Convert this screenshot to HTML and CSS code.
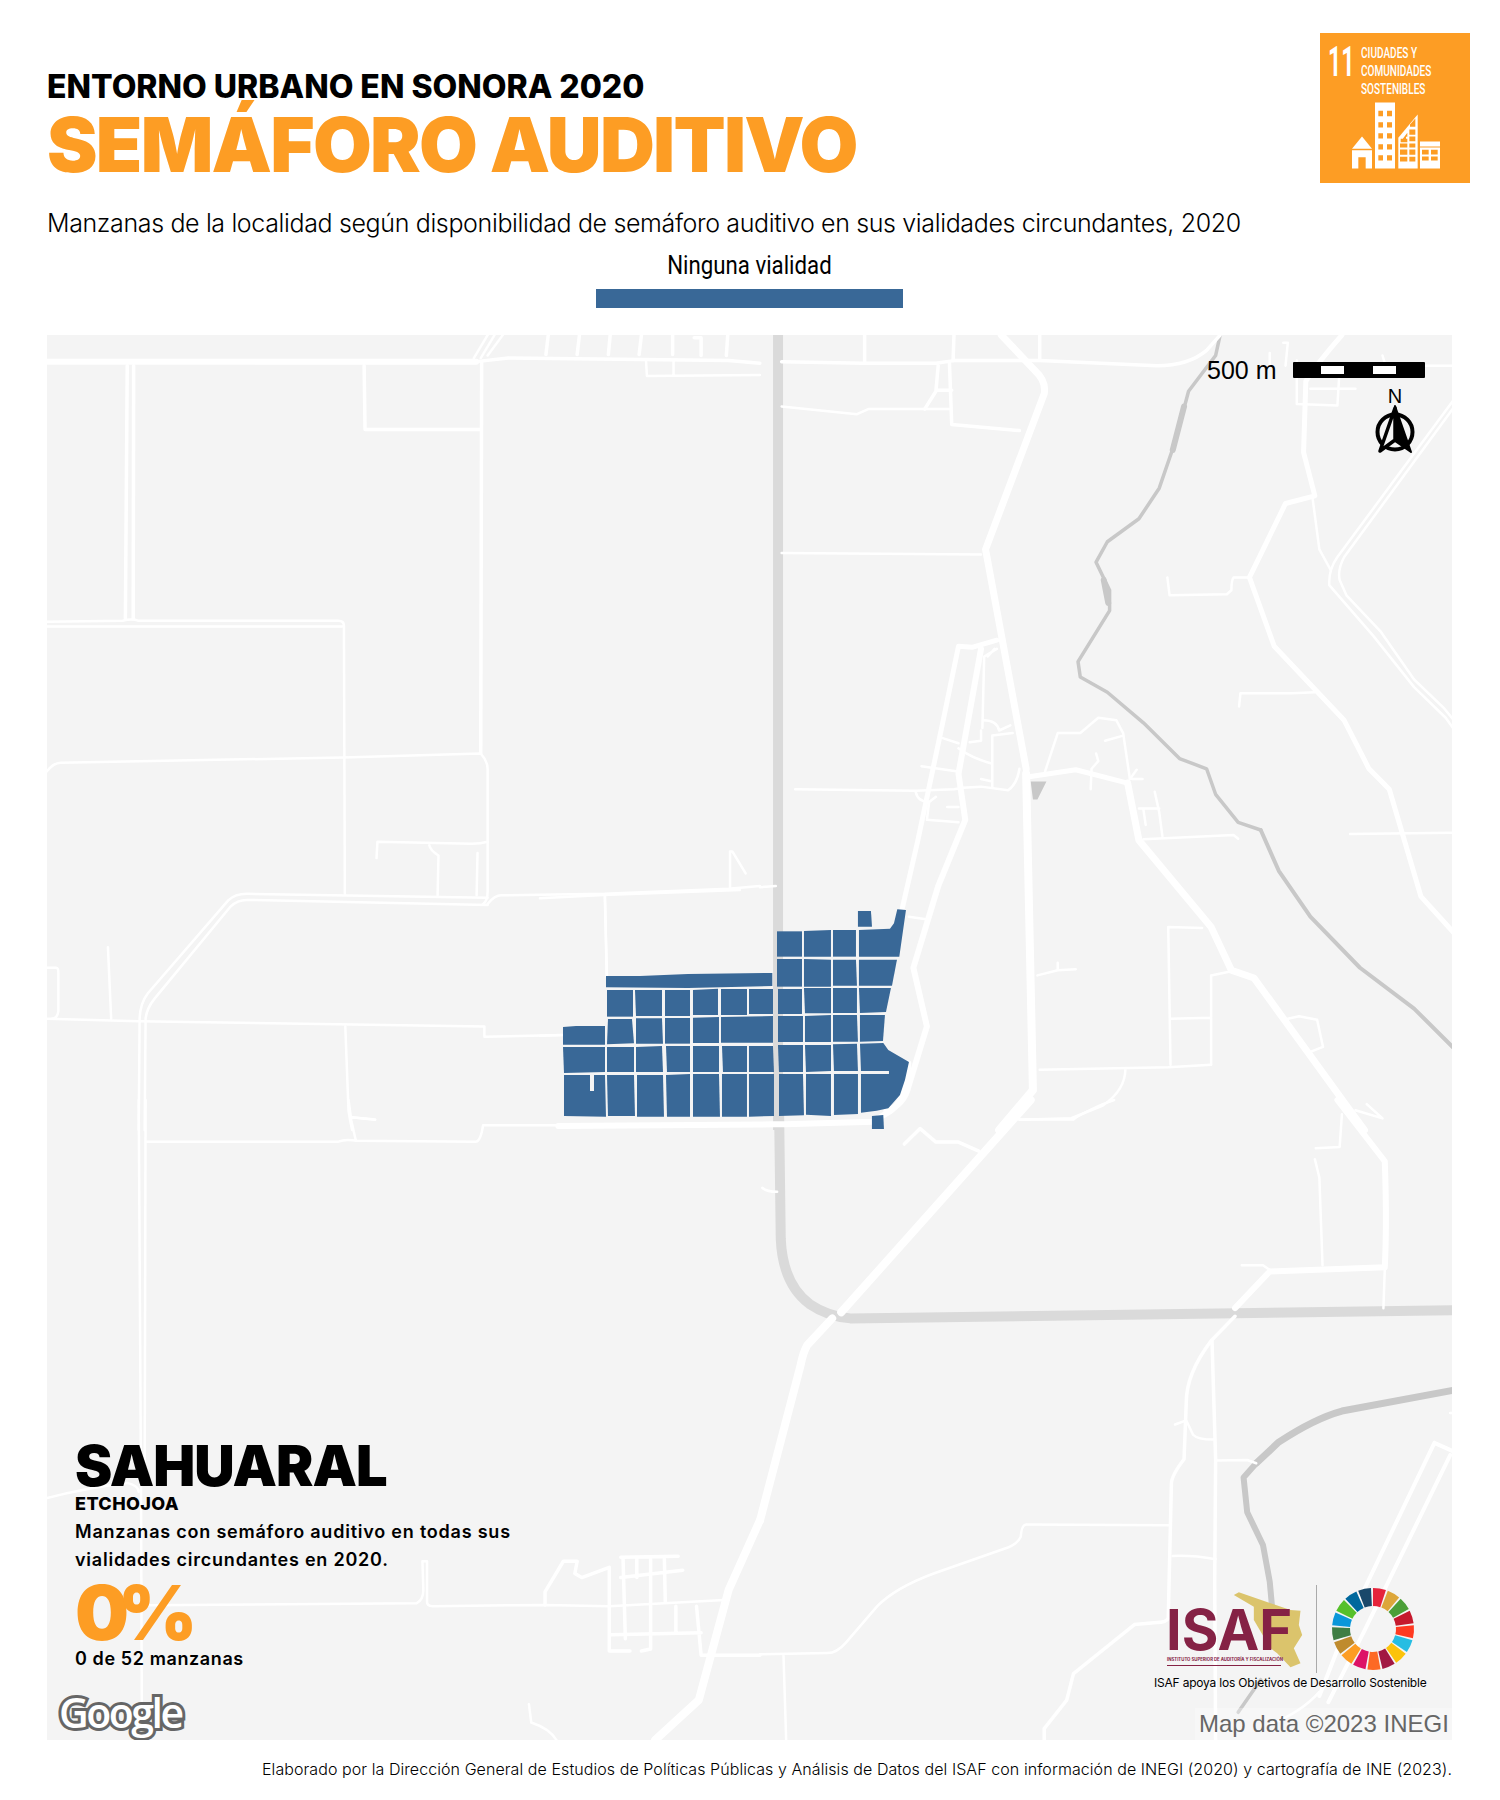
FILE: index.html
```html
<!DOCTYPE html>
<html lang="es">
  <head>
    <meta charset="utf-8">
    <title>Semáforo auditivo - Sahuaral</title>
    <link rel="stylesheet" href="styles.css">
  </head>
  <body>
    <div class="page">
      <header class="header">
        <div class="titles">
          <p class="kicker">ENTORNO URBANO EN SONORA 2020</p>
          <h1 class="title">SEMÁFORO AUDITIVO</h1>
        </div>
        <div class="sdg-badge">
          <div class="sdg-head">
            <span class="sdg-num">11</span>
            <span class="sdg-name">CIUDADES Y<br>COMUNIDADES<br>SOSTENIBLES</span>
          </div>
          <svg class="sdg-city" viewBox="600 275 276 206">
            <!-- casa -->
            <polygon class="w" points="606,418 636,381 666,418"/>
            <path class="w" d="M606 422H666V477H647V443H625V477H606Z"/>
            <!-- torre -->
            <rect class="w" x="675" y="279" width="60" height="198"/>
            <path class="o" d="M685 304h14v16h-14zM711 304h15v16h-15zM685 338h14v16h-14zM711 338h15v16h-15zM685 371h14v16h-14zM711 371h15v16h-15zM685 404h14v16h-14zM711 404h15v16h-15zM685 437h14v16h-14zM711 437h15v16h-15z"/>
            <!-- edificio inclinado -->
            <polygon class="w" points="745,477 745,385 803,315 803,477"/>
            <path class="o" d="M780 345l16-18v25h-16zM755 392l17-22v12l-4 0v10zM778 360h18v16h-18zM752 388h20v10h-20zM778 381h18v14h-18zM750 402h22v12h-22zM778 402h18v12h-18zM750 420h22v16h-22zM778 420h18v16h-18zM750 442h22v14h-22zM778 442h18v14h-18z"/>
            <!-- bajo -->
            <rect class="w" x="810" y="396" width="60" height="81"/>
            <path class="o" d="M810 411h60v3h-60zM816 421h20v14h-20zM843 421h20v14h-20zM816 441h20v12h-20zM843 441h20v12h-20z"/>
          </svg>
        </div>
      </header>

      <p class="subtitle">Manzanas de la localidad según disponibilidad de semáforo auditivo en sus vialidades circundantes, 2020</p>

      <div class="legend">
        <span class="legend-label">Ninguna vialidad</span>
        <span class="legend-bar"></span>
      </div>

      <div class="map">
        <svg class="map-art" viewBox="47 335 1405 1405" width="1405" height="1405">
          <!-- carretera gris y rio: tramo derecho arriba -->
          <g transform="translate(760 330) scale(.4511 .5102)">
            <path class="highway" d="M40 10V1568"/>
            <path class="river r3" d="M1020 10L1010 50 950 120 920 220 885 310 840 370 770 415 745 455 775 510 775 550 705 650 710 680 770 710 850 770 930 840 990 860 1010 910 1060 965 1110 980"/>
            <path class="river r6" d="M940 150L915 235M762 490L772 535"/>
            <path class="river r4" d="M1110 980L1150 1060 1220 1150 1330 1250 1450 1330 1552 1420"/>
            <path class="blob" d="M600 885L635 885 615 920 605 920Z"/>
          </g>
          <g transform="translate(760 1100) scale(.4511 .4082)">
            <path class="highway" d="M42 0L46 340Q50 450 110 500 150 530 200 535L1552 515"/>
            <path class="river r7" d="M1552 708L1290 762Q1230 780 1150 838L1100 890"/>
            <path class="river r6" d="M1100 890L1072 925 1080 1010 1115 1090 1130 1180 1135 1240"/>
            <path class="river r3" d="M1110 1420L1060 1500"/>
          </g>

          <!-- cuadrante noroeste -->
          <g transform="translate(40 330) scale(.4591 .5102)">
            <path class="r6" d="M15 62H950"/>
            <path class="r3" d="M950 62L1020 55 1310 58 1500 60 1568 65"/>
            <path class="r3" d="M190 70L186 565M204 70L203 565"/>
            <path class="r2" d="M15 572L180 570Q200 565 215 570L650 570Q662 570 662 580M15 581L658 581"/>
            <path class="r2" d="M662 580L664 1105"/>
            <path class="r3" d="M706 70L708 195H960M962 62L960 830"/>
            <path class="r2" d="M15 865Q30 848 45 848L660 838 960 830Q975 845 975 860V1100Q975 1120 965 1125"/>
            <path class="r2" d="M975 1003Q960 1007 940 1007L735 1003 733 1035M848 1010Q850 1020 868 1030L866 1108M953 1025L951 1108"/>
            <path class="r2" d="M975 1113L450 1105Q425 1105 410 1118L235 1300Q218 1320 217 1350L215 1568"/>
            <path class="r2" d="M975 1127L450 1117Q430 1117 415 1130L250 1310Q232 1330 230 1350L228 1568"/>
            <path class="r2" d="M975 1125Q990 1108 1005 1108L1230 1105 1500 1095 1568 1090M1230 1105L1235 1265"/>
            <path class="r2" d="M1503 1095V1022H1508L1537 1065"/>
            <path class="r2" d="M15 1350L215 1355 968 1365V1385L1140 1382"/>
            <path class="r2" d="M15 1250H35Q40 1250 40 1260V1335Q38 1350 25 1350M148 1210L155 1350"/>
            <path class="r2" d="M665 1365L672 1530Q675 1550 680 1568M678 1543L730 1548"/>
            <path class="r2" d="M945 55L975 10M960 55L990 10M975 50L1008 10"/>
            <path class="r3" d="M1107 10L1102 48M1175 10L1170 48M1242 10L1238 48M1310 10L1305 48M1378 10V48M1425 15H1440V50M1498 10L1495 50"/>
            <path class="r2" d="M1320 60L1322 90 1568 88M1380 60V88"/>
          </g>

          <!-- cuadrante suroeste -->
          <g transform="translate(40 1100) scale(.4591 .4082)">
            <path class="r2" d="M215 0L220 940 222 1568M230 0L228 940"/>
            <path class="r2" d="M232 102H650Q665 95 690 100L950 102Q960 100 965 62H1140"/>
            <path class="r2" d="M672 0L678 50 688 100M678 42L730 48"/>
            <path class="r2" d="M15 975Q100 950 190 938 215 945 215 960"/>
            <path class="r2" d="M232 1238L820 1233Q835 1225 835 1200L833 1130H843V1230Q843 1240 855 1240L1100 1237 1240 1240 1490 1225"/>
            <path class="r3" d="M1100 1237V1205L1140 1130H1170L1165 1160 1180 1170 1240 1145V1350H1285M1265 1120L1390 1118M1270 1125L1275 1320M1300 1125V1170M1330 1125V1345L1310 1350M1360 1125L1362 1230M1265 1170L1400 1152M1245 1310L1440 1305M1385 1240V1305M1430 1240L1440 1360H1568"/>
            <path class="r8" d="M1568 1030L1500 1200 1435 1470 1340 1568"/>
            <path class="r2" d="M1065 1480L1070 1525Q1110 1540 1125 1568"/>
          </g>

          <!-- cuadrante noreste -->
          <g transform="translate(760 330) scale(.4511 .5102)">
            <path class="r7" d="M535 10L610 80Q635 100 630 125L500 430 590 860"/>
            <path class="r8" d="M590 870L605 1490 530 1568"/>
            <path class="r3" d="M48 62L230 65H390L430 60H620L880 70Q950 70 990 40L1020 10"/>
            <path class="r3" d="M232 10V62M430 10L428 60M620 10V58"/>
            <path class="r3" d="M395 70L390 120 365 155M390 118H425M420 65L425 185 575 197"/>
            <path class="r2" d="M48 150L215 165 240 155H420M48 437L490 440"/>
            <path class="r5" d="M1290 10Q1240 60 1210 100L1205 240 1230 325 1165 340 1085 485 1140 620 1295 765 1350 860 1395 900 1465 1110 1552 1195"/>
            <path class="r2" d="M1190 60V145L1280 148 1285 75M1220 115H1320M1380 50L1385 65M1160 25H1170L1165 70M1130 45V70M1260 70H1552"/>
            <path class="r2" d="M1225 330L1240 430 1265 470"/>
            <path class="r2" d="M1552 120L1280 445Q1260 470 1262 500L1360 600 1450 700 1520 760 1552 800"/>
            <path class="r2" d="M1552 135L1295 445Q1280 470 1285 490L1300 520 1375 590 1450 685 1515 740 1552 780"/>
            <path class="r2" d="M1085 485H1050Q1045 490 1045 510L1035 518 908 520 903 485"/>
            <path class="r2" d="M1062 738L1065 712H1180L1230 710M1308 988L1552 985"/>
            <path class="r5" d="M525 608L470 622 440 620 405 770 350 1000 315 1135"/>
            <path class="r6" d="M490 625L440 870 455 960 395 1090 340 1250 370 1365 330 1480Q320 1520 280 1530"/>
            <path class="r2" d="M525 625L497 640 493 780M520 625L505 640"/>
            <path class="r2" d="M405 800L440 810M358 855L435 865M440 820Q470 840 515 850M515 795V895M515 795L560 790M495 765Q525 765 530 785L555 775M490 785V805L465 808M490 880L515 885"/>
            <path class="r2" d="M78 900L345 903 430 900 450 897 490 895 550 902Q570 890 575 860M345 905Q350 925 375 925L390 915M375 925L370 960 440 965M415 935H440"/>
            <path class="r2" d="M632 865L660 790H710L750 760 790 765 805 790 820 880"/>
            <path class="r5" d="M600 875L700 862 815 888"/>
            <path class="r2" d="M765 805L805 795M745 830L750 845 735 860 733 900M820 880L835 862M825 880H848"/>
            <path class="r7" d="M815 888L840 1000 1000 1170 1045 1255 1095 1270 1300 1520 1340 1568"/>
            <path class="r2" d="M840 938H885M875 905L885 945 892 992M850 940L855 970M850 998L1050 990 1060 997"/>
            <path class="r2" d="M905 1170L910 1440M905 1170L980 1172M1000 1265V1440M1000 1265L1045 1257M910 1350L1000 1348"/>
            <path class="r2" d="M620 1450L905 1445 1000 1440M810 1448Q810 1490 760 1520L690 1545 575 1548"/>
            <path class="r2" d="M615 1265L660 1255 700 1253M660 1255V1240M330 1150L368 1155M0 1092L35 1090"/>
            <path class="r2" d="M1170 1350L1195 1345 1235 1352 1248 1405 1220 1415M1285 1500L1310 1530"/>
          </g>

          <!-- cuadrante sureste -->
          <g transform="translate(760 1100) scale(.4511 .4082)">
            <path class="r8" d="M600 0L180 520"/>
            <path class="r8" d="M160 535L105 600Q95 620 90 650L0 1030"/>
            <path class="r3" d="M1053 530L1000 590Q945 670 945 740L940 880Q912 920 912 940L905 1270Q900 1280 880 1280L830 1285 695 1405 680 1470 630 1540V1568"/>
            <path class="r3" d="M1002 590L1010 880 1008 1180 1010 1568"/>
            <path class="r6" d="M1053 510L1130 420 1385 410Q1390 300 1385 150L1280 0"/>
            <path class="r2" d="M1385 415L1382 510M1068 405H1115L1135 420M1230 145L1240 190 1247 405M1290 35L1285 115 1232 118M1345 10L1380 45 1320 25"/>
            <path class="r3" d="M320 108L355 70 390 103H440L485 125"/>
            <path class="r2" d="M5 215Q15 225 38 225M575 48H695Q700 40 760 10L785 0"/>
            <path class="r2" d="M920 795L945 785 960 820Q970 832 1005 832M1012 883L1080 882 1100 890M915 1117Q960 1115 1010 1125"/>
            <path class="r2" d="M905 1042L590 1040Q580 1040 578 1070 570 1090 540 1100L385 1160Q300 1195 260 1240L190 1330Q170 1355 150 1355L0 1358M52 1358L58 1568"/>
            <path class="r4" d="M1495 840L1300 1290 1240 1460M1530 870L1340 1300 1260 1475M1495 840L1552 868"/>
            <path class="r2" d="M1530 767H1552M1240 1450Q1200 1500 1130 1530"/>
          </g>

          <!-- manzanas y calle inferior -->
          <g transform="translate(540 890) scale(.3333)">
            <path class="r6" d="M55 708L700 703H735L1000 695 1040 670Q1100 640 1105 520"/>
            <path class="r2" d="M0 25L190 15 600 0M195 15L200 260M0 437L65 435"/>
            <g class="blocks">
              <polygon points="954,63 993,63 996,110 954,110"/>
              <polygon points="957,120 1050,116 1062,100 1072,58 1098,60 1078,200 957,200"/>
              <polygon points="711,124 786,124 786,200 711,200"/>
              <polygon points="792,123 873,120 873,200 792,200"/>
              <polygon points="879,120 948,120 948,200 879,200"/>
              <polygon points="711,207 786,207 786,290 711,290"/>
              <polygon points="792,207 873,209 873,290 792,290"/>
              <polygon points="879,209 948,209 951,287 879,287"/>
              <polygon points="957,209 1071,209 1056,287 957,287"/>
              <polygon points="198,258 300,258 444,252 697,249 697,288 444,294 198,292"/>
              <polygon points="201,300 279,300 279,380 201,380"/>
              <polygon points="285,300 366,300 366,378 288,378"/>
              <polygon points="375,300 450,300 450,378 375,378"/>
              <polygon points="459,300 534,296 534,375 459,375"/>
              <polygon points="543,297 621,297 621,375 543,375"/>
              <polygon points="627,297 699,297 699,372 627,372"/>
              <polygon points="714,297 786,297 786,372 714,372"/>
              <polygon points="792,294 873,294 873,370 795,370"/>
              <polygon points="879,294 951,294 951,369 879,369"/>
              <polygon points="957,294 1053,294 1038,366 960,369"/>
              <polygon points="204,387 276,387 282,460 201,463"/>
              <polygon points="288,385 366,385 369,461 288,461"/>
              <polygon points="375,384 450,384 450,461 375,461"/>
              <polygon points="459,383 537,381 537,459 459,459"/>
              <polygon points="543,381 699,378 699,458 543,458"/>
              <polygon points="714,378 789,378 789,456 714,456"/>
              <polygon points="795,378 873,375 873,456 795,456"/>
              <polygon points="879,375 951,375 954,455 879,455"/>
              <polygon points="960,375 1035,375 1029,453 960,455"/>
              <polygon points="69,411 108,408 195,408 195,464 69,464"/>
              <polygon points="69,471 195,471 195,546 72,549"/>
              <polygon points="201,471 282,471 282,546 201,546"/>
              <polygon points="288,471 366,468 369,546 288,546"/>
              <polygon points="378,468 450,468 450,546 381,546"/>
              <polygon points="459,468 537,468 537,546 459,546"/>
              <polygon points="546,468 621,468 621,546 549,546"/>
              <polygon points="627,468 699,468 702,546 627,546"/>
              <polygon points="714,465 789,465 789,546 717,546"/>
              <polygon points="795,465 873,465 873,543 798,546"/>
              <polygon points="879,463 951,461 954,543 882,543"/>
              <polygon points="960,461 1030,459 1045,480 1107,516 1095,570 1080,615 1045,655 1010,662 963,668 963,552 1047,552 1047,543 963,543"/>
              <polygon points="72,555 150,555 150,603 162,603 162,555 195,555 198,680 72,678"/>
              <polygon points="201,555 282,555 285,678 204,678"/>
              <polygon points="291,555 369,555 372,680 291,680"/>
              <polygon points="378,555 450,552 450,680 381,680"/>
              <polygon points="459,552 537,552 540,680 459,680"/>
              <polygon points="546,552 621,552 621,680 546,680"/>
              <polygon points="627,552 702,552 702,678 627,680"/>
              <polygon points="717,552 789,552 792,676 717,678"/>
              <polygon points="798,552 873,552 873,678 798,674"/>
              <polygon points="882,552 954,552 954,672 882,675"/>
              <polygon points="996,678 1030,675 1032,717 996,717"/>
            </g>
          </g>
        </svg>

        <!-- escala y norte -->
        <div class="scale">
          <span class="scale-label">500 m</span>
          <svg class="scale-bar" viewBox="0 0 132 16" width="132" height="16">
            <rect width="132" height="16" rx="1"/>
            <rect class="scale-gap" x="28" y="4" width="23" height="8"/>
            <rect class="scale-gap" x="80" y="4" width="23" height="8"/>
          </svg>
        </div>
        <div class="north">
          <span class="north-n">N</span>
          <svg viewBox="0 0 44 50" width="44" height="50">
            <circle class="north-ring" cx="22" cy="27" r="17.5"/>
            <path class="north-left" d="M22 3L7 46 22 35Z"/>
            <path class="north-right" d="M22 1L38 47 22 36Z"/>
          </svg>
        </div>

        <!-- ficha de la localidad -->
        <div class="info">
          <h2 class="info-place">SAHUARAL</h2>
          <p class="info-mun">ETCHOJOA</p>
          <p class="info-desc">Manzanas con semáforo auditivo en todas sus vialidades circundantes en 2020.</p>
          <p class="info-pct">0%</p>
          <p class="info-count">0 de 52 manzanas</p>
        </div>

        <span class="google">Google</span>

        <!-- logos -->
        <div class="logos">
          <div class="logos-row">
            <div class="isaf">
              <svg class="isaf-map" viewBox="305 90 215 240" width="72" height="80">
                <polygon points="310,105 325,97 480,150 510,152 505,195 515,225 490,265 510,310 480,322 440,280 420,265 370,180 370,140"/>
              </svg>
              <span class="isaf-name">ISAF</span>
              <span class="isaf-full">INSTITUTO SUPERIOR DE AUDITORÍA Y FISCALIZACIÓN</span>
            </div>
            <span class="logos-rule"></span>
            <svg class="wheel" viewBox="0 0 84 84" width="84" height="84">
              <circle class="seg" stroke="#e5243b" transform="rotate(-90 42 42)" cx="42" cy="42" r="32"/>
              <circle class="seg" stroke="#dda63a" transform="rotate(-68.8 42 42)" cx="42" cy="42" r="32"/>
              <circle class="seg" stroke="#4c9f38" transform="rotate(-47.6 42 42)" cx="42" cy="42" r="32"/>
              <circle class="seg" stroke="#c5192d" transform="rotate(-26.5 42 42)" cx="42" cy="42" r="32"/>
              <circle class="seg" stroke="#ff3a21" transform="rotate(-5.3 42 42)" cx="42" cy="42" r="32"/>
              <circle class="seg" stroke="#26bde2" transform="rotate(15.9 42 42)" cx="42" cy="42" r="32"/>
              <circle class="seg" stroke="#fcc30b" transform="rotate(37.1 42 42)" cx="42" cy="42" r="32"/>
              <circle class="seg" stroke="#a21942" transform="rotate(58.2 42 42)" cx="42" cy="42" r="32"/>
              <circle class="seg" stroke="#fd6925" transform="rotate(79.4 42 42)" cx="42" cy="42" r="32"/>
              <circle class="seg" stroke="#dd1367" transform="rotate(100.6 42 42)" cx="42" cy="42" r="32"/>
              <circle class="seg" stroke="#fd9d24" transform="rotate(121.8 42 42)" cx="42" cy="42" r="32"/>
              <circle class="seg" stroke="#bf8b2e" transform="rotate(142.9 42 42)" cx="42" cy="42" r="32"/>
              <circle class="seg" stroke="#3f7e44" transform="rotate(164.1 42 42)" cx="42" cy="42" r="32"/>
              <circle class="seg" stroke="#0a97d9" transform="rotate(185.3 42 42)" cx="42" cy="42" r="32"/>
              <circle class="seg" stroke="#56c02b" transform="rotate(206.5 42 42)" cx="42" cy="42" r="32"/>
              <circle class="seg" stroke="#00689d" transform="rotate(227.6 42 42)" cx="42" cy="42" r="32"/>
              <circle class="seg" stroke="#19486a" transform="rotate(248.8 42 42)" cx="42" cy="42" r="32"/>
            </svg>
          </div>
          <p class="logos-caption">ISAF apoya los Objetivos de Desarrollo Sostenible</p>
        </div>

        <span class="map-data">Map data ©2023 INEGI</span>
      </div>

      <p class="credits">Elaborado por la Dirección General de Estudios de Políticas Públicas y Análisis de Datos del ISAF con información de INEGI (2020) y cartografía de INE (2023).</p>
    </div>
  </body>
</html>
```
FILE: styles.css
```css
* {
  box-sizing: border-box;
}

body {
  margin: 0;
  background-color: #fff;
  color: #000;
  font-family: Inter, "Liberation Sans", sans-serif;
}

p, h1, h2 {
  margin: 0;
}

.page {
  width: 1500px;
  padding-left: 47px;
}

/* encabezado */
.header {
  display: flex;
  justify-content: space-between;
  width: 1423px;
  padding-top: 33px;
}

.titles {
  padding-top: 34px;
}

.kicker {
  font-size: 32px;
  line-height: 40px;
  font-weight: 800;
}

.title {
  margin-top: -5px;
  font-size: 76px;
  line-height: 84px;
  font-weight: 900;
  letter-spacing: -1.75px;
  color: #fd9d24;
}

.sdg-badge {
  width: 150px;
  height: 150px;
  padding: 11px 0 0 8px;
  background-color: #fd9d24;
  color: #fff;
}

.sdg-head {
  display: flex;
  gap: 9px;
}

.sdg-num {
  flex: 0 0 24px;
  min-width: 0;
  font-family: Roboto, sans-serif;
  font-size: 42px;
  line-height: 36px;
  font-weight: 700;
  transform: scaleX(0.55);
  transform-origin: left top;
}

.sdg-name {
  flex: 0 0 90px;
  font-family: Roboto, sans-serif;
  font-size: 15px;
  line-height: 18px;
  font-weight: 500;
  white-space: nowrap;
  transform: scaleX(0.67);
  transform-origin: left top;
}

.sdg-city {
  display: block;
  width: 92px;
  height: 69px;
  margin: 3px 0 0 22px;
}

.sdg-city .w {
  fill: #fff;
}

.sdg-city .o {
  fill: #fd9d24;
}

.subtitle {
  margin-top: 20px;
  font-size: 25px;
  line-height: 34px;
  font-weight: 300;
  letter-spacing: -0.36px;
}

/* leyenda */
.legend {
  display: flex;
  flex-direction: column;
  align-items: center;
  width: 1405px;
  margin-top: 10px;
}

.legend-label {
  font-family: Roboto, sans-serif;
  font-size: 25px;
  line-height: 32px;
  transform: scaleX(0.89);
}

.legend-bar {
  width: 307px;
  height: 19px;
  margin-top: 7px;
  background-color: #396897;
}

/* mapa */
.map {
  position: relative;
  width: 1405px;
  height: 1405px;
  margin-top: 27px;
  overflow: hidden;
  background-color: #f4f4f4;
}

.map-art {
  display: block;
}

.map-art path {
  fill: none;
  stroke: #fff;
  stroke-linejoin: round;
  stroke-linecap: round;
  vector-effect: non-scaling-stroke;
}

.map-art .r2 { stroke-width: 2.5px; }
.map-art .r3 { stroke-width: 3.5px; }
.map-art .r4 { stroke-width: 4px; }
.map-art .r5 { stroke-width: 5px; }
.map-art .r6 { stroke-width: 6px; }
.map-art .r7 { stroke-width: 7px; }
.map-art .r8 { stroke-width: 8px; }

.map-art .highway {
  stroke: #dadada;
  stroke-width: 10px;
  stroke-linecap: butt;
}

.map-art .river {
  stroke: #c8c8c8;
}

.map-art .blob {
  fill: #c8c8c8;
  stroke: none;
}

.blocks polygon {
  fill: #396897;
}

.scale {
  position: absolute;
  top: 20px;
  left: 1160px;
  display: flex;
  align-items: center;
  gap: 17px;
}

.scale-label {
  font-family: "Liberation Sans", sans-serif;
  font-size: 25px;
  line-height: 30px;
}

.scale-bar {
  display: block;
}

.scale-gap {
  fill: #fff;
}

.north {
  position: absolute;
  top: 52px;
  left: 1326px;
  display: flex;
  flex-direction: column;
  align-items: center;
  width: 44px;
}

.north-n {
  font-family: "Liberation Sans", sans-serif;
  font-size: 20px;
  line-height: 18px;
}

.north svg {
  display: block;
}

.north-ring {
  fill: none;
  stroke: #000;
  stroke-width: 4px;
}

.north-left {
  fill: #f4f4f4;
  stroke: #000;
  stroke-width: 3.5px;
  stroke-linejoin: round;
}

.north-right {
  fill: #000;
  stroke: #000;
  stroke-width: 2px;
  stroke-linejoin: round;
}

/* ficha */
.info {
  position: absolute;
  top: 1103px;
  left: 28px;
  width: 450px;
}

.info-place {
  font-size: 56px;
  line-height: 56px;
  font-weight: 900;
  letter-spacing: -1px;
}

.info-mun {
  font-size: 18px;
  line-height: 20px;
  font-weight: 800;
  letter-spacing: 0.4px;
}

.info-desc {
  margin-top: 4px;
  font-size: 18px;
  line-height: 28px;
  font-weight: 600;
  letter-spacing: 0.78px;
}

.info-pct {
  font-size: 76px;
  line-height: 76px;
  font-weight: 900;
  letter-spacing: -11px;
  color: #fd9d24;
}

.info-count {
  margin-top: -3px;
  font-size: 18px;
  line-height: 24px;
  font-weight: 600;
  letter-spacing: 0.6px;
}

.google {
  position: absolute;
  top: 1352px;
  left: 12px;
  font-family: "Open Sans", sans-serif;
  font-size: 41px;
  line-height: 50px;
  font-weight: 600;
  letter-spacing: -2.5px;
  color: #fff;
  -webkit-text-stroke: 6px #666;
  paint-order: stroke fill;
}

.logos {
  position: absolute;
  top: 1249px;
  left: 1100px;
  width: 290px;
}

.logos-row {
  display: flex;
  align-items: center;
  padding-left: 20px;
}

.isaf {
  position: relative;
  width: 125px;
  height: 90px;
}

.isaf-map {
  position: absolute;
  top: 6px;
  left: 65px;
  fill: #dbc46c;
}

.isaf-name {
  position: absolute;
  top: 16px;
  left: -1px;
  font-size: 56px;
  line-height: 60px;
  font-weight: 700;
  color: #852245;
}

.isaf-full {
  position: absolute;
  top: 73px;
  left: 0;
  width: 114px;
  padding-bottom: 2px;
  border-bottom: 1px solid #852245;
  font-size: 4.3px;
  line-height: 6px;
  font-weight: 700;
  white-space: nowrap;
  color: #852245;
}

.logos-rule {
  flex: 0 0 1px;
  height: 88px;
  margin: 0 14px 0 24px;
  background-color: #aaa;
}

.wheel {
  display: block;
}

.seg {
  fill: none;
  stroke-width: 18px;
  stroke-dasharray: 10.3 190.8;
}

.logos-caption {
  margin-left: 7px;
  font-size: 12px;
  line-height: 18px;
  letter-spacing: -0.2px;
  white-space: nowrap;
}

.map-data {
  position: absolute;
  right: 0;
  bottom: 0;
  width: 257px;
  height: 32px;
  padding-left: 4px;
  background-color: rgba(255, 255, 255, 0.3);
  font-family: "Liberation Sans", sans-serif;
  font-size: 24px;
  line-height: 32px;
  white-space: nowrap;
  color: #666;
}

.credits {
  width: 1405px;
  margin-top: 19px;
  font-size: 16px;
  line-height: 20px;
  font-weight: 300;
  letter-spacing: 0.07px;
  text-align: right;
  white-space: nowrap;
}
```
